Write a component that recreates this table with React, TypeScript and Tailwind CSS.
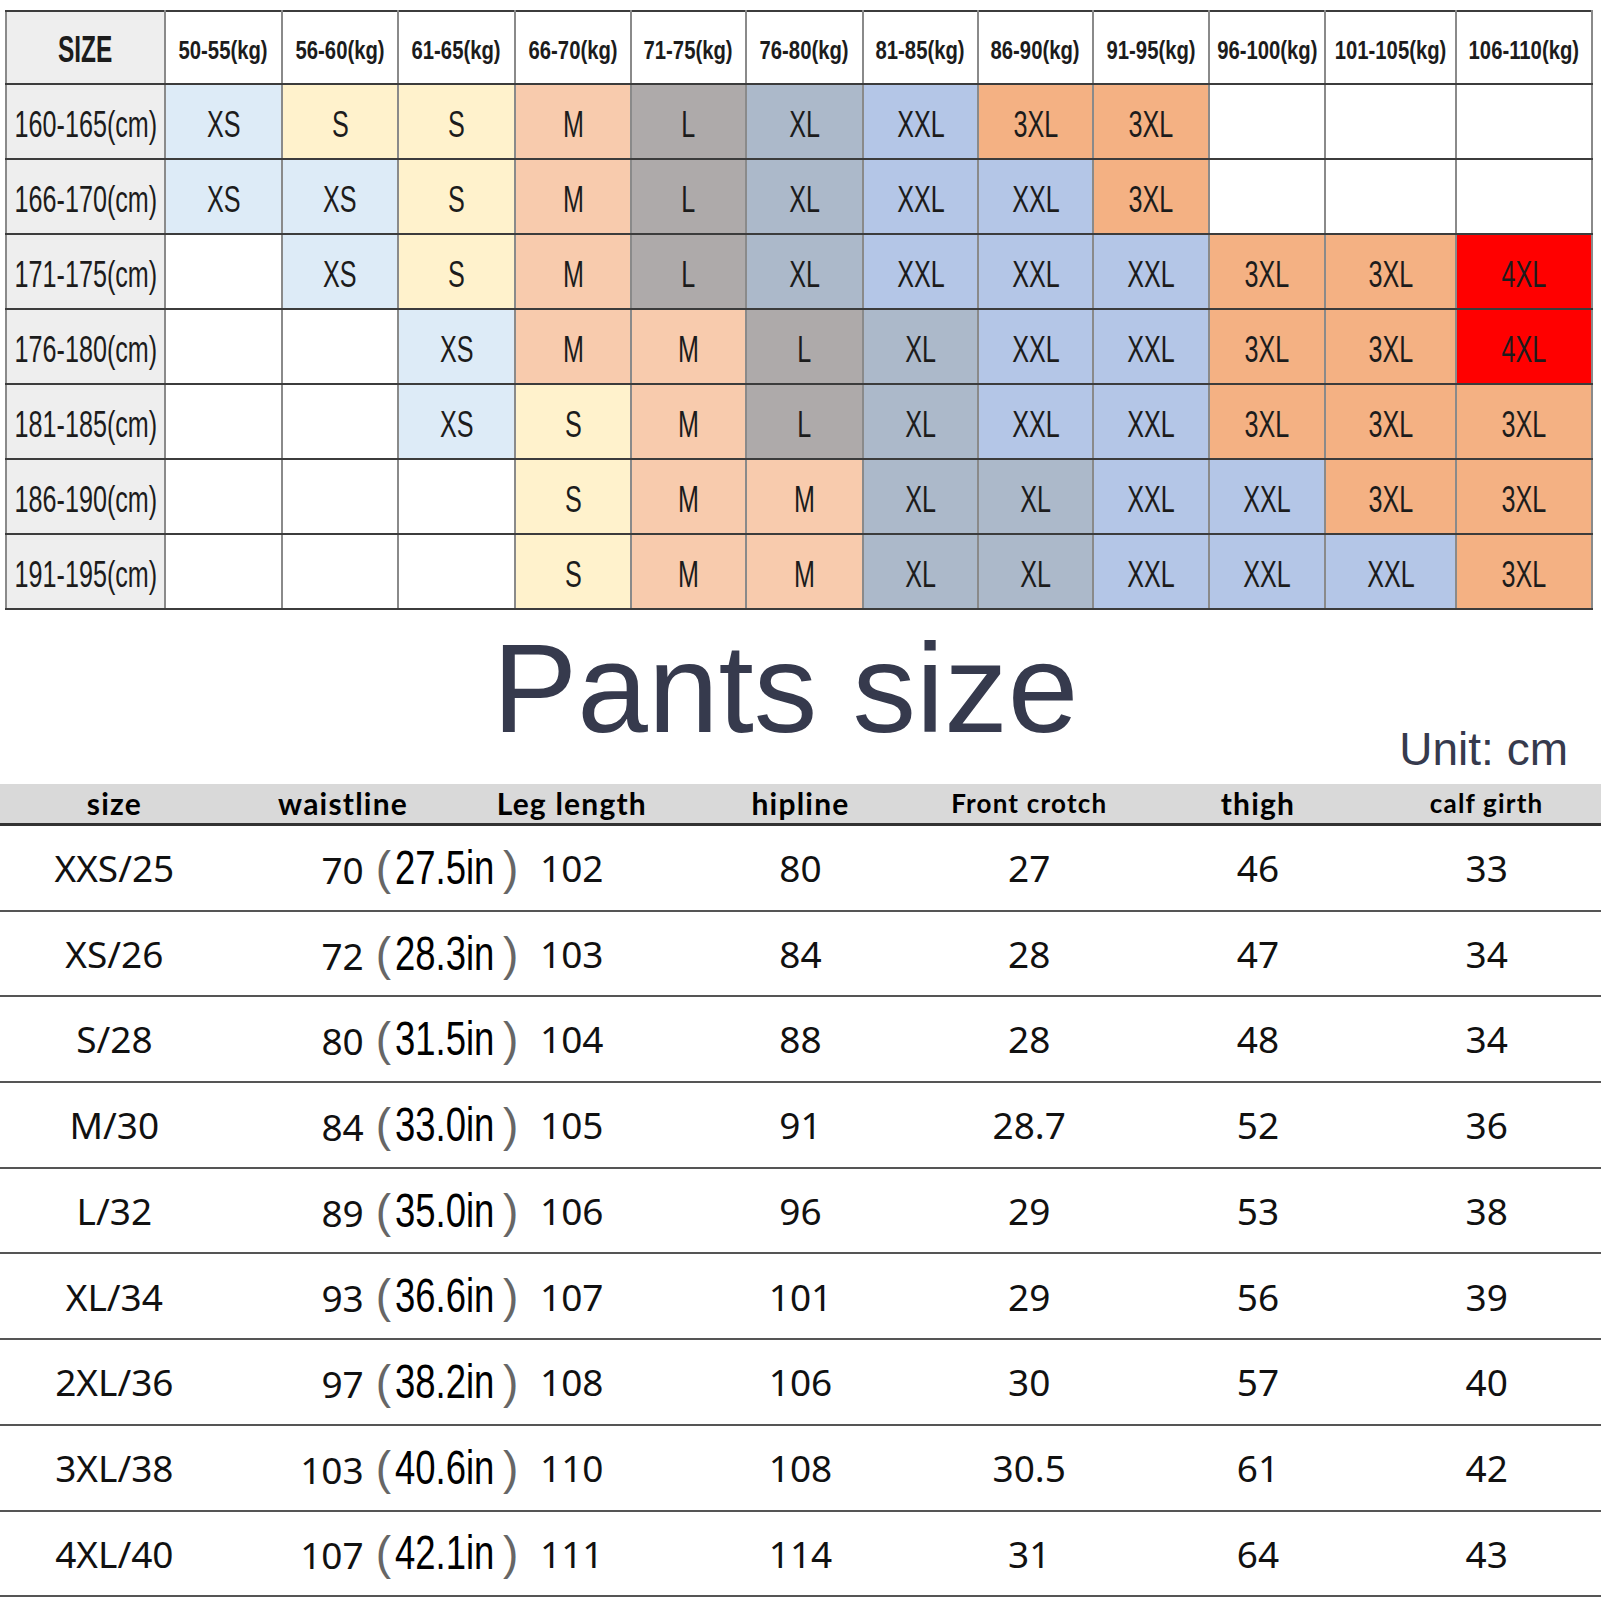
import React from 'react';

const weights = [
    '50-55(kg)', '56-60(kg)', '61-65(kg)', '66-70(kg)', '71-75(kg)', '76-80(kg)',
    '81-85(kg)', '86-90(kg)', '91-95(kg)', '96-100(kg)', '101-105(kg)', '106-110(kg)',
];
const colWidths = ['w-[159px]', 'w-[117px]', 'w-[116px]', 'w-[117px]', 'w-[116px]', 'w-[115px]', 'w-[117px]', 'w-[115px]', 'w-[115px]', 'w-[116px]', 'w-[116px]', 'w-[131px]', 'w-[136px]'];

const chart: [string, string[]][] = [
    ['160-165(cm)', ['XS', 'S', 'S', 'M', 'L', 'XL', 'XXL', '3XL', '3XL', '', '', '']],
    ['166-170(cm)', ['XS', 'XS', 'S', 'M', 'L', 'XL', 'XXL', 'XXL', '3XL', '', '', '']],
    ['171-175(cm)', ['', 'XS', 'S', 'M', 'L', 'XL', 'XXL', 'XXL', 'XXL', '3XL', '3XL', '4XL']],
    ['176-180(cm)', ['', '', 'XS', 'M', 'M', 'L', 'XL', 'XXL', 'XXL', '3XL', '3XL', '4XL']],
    ['181-185(cm)', ['', '', 'XS', 'S', 'M', 'L', 'XL', 'XXL', 'XXL', '3XL', '3XL', '3XL']],
    ['186-190(cm)', ['', '', '', 'S', 'M', 'M', 'XL', 'XL', 'XXL', 'XXL', '3XL', '3XL']],
    ['191-195(cm)', ['', '', '', 'S', 'M', 'M', 'XL', 'XL', 'XXL', 'XXL', 'XXL', '3XL']],
];

const sizeColor: Record<string, string> = {
    XS: 'bg-[#ddebf7]',
    S: 'bg-[#fff2cc]',
    M: 'bg-[#f8cbad]',
    L: 'bg-[#aeaaaa]',
    XL: 'bg-[#acb9ca]',
    XXL: 'bg-[#b4c6e7]',
    '3XL': 'bg-[#f4b183]',
    '4XL': 'bg-[#ff0000]',
};

const pants = [
    ['XXS/25', '70', '27.5in', '102', '80', '27', '46', '33'],
    ['XS/26', '72', '28.3in', '103', '84', '28', '47', '34'],
    ['S/28', '80', '31.5in', '104', '88', '28', '48', '34'],
    ['M/30', '84', '33.0in', '105', '91', '28.7', '52', '36'],
    ['L/32', '89', '35.0in', '106', '96', '29', '53', '38'],
    ['XL/34', '93', '36.6in', '107', '101', '29', '56', '39'],
    ['2XL/36', '97', '38.2in', '108', '106', '30', '57', '40'],
    ['3XL/38', '103', '40.6in', '110', '108', '30.5', '61', '42'],
    ['4XL/40', '107', '42.1in', '111', '114', '31', '64', '43'],
];

const pantsHead = ['size', 'waistline', 'Leg length', 'hipline', 'Front crotch', 'thigh', 'calf girth'];

const cellBorder = "border-2 border-x-[#8a8a8a] border-y-[#3c3c3c]";

// condensed text: the box keeps its width, so centre it with flex so overflow is even on both sides
const Narrow = ({ children, scale }: { children: React.ReactNode, scale: string }) => (
    <div className="flex justify-center">
        <span className={"inline-block shrink-0 whitespace-nowrap " + scale}>{children}</span>
    </div>
);

const App = () => {
    return (
        <div className="w-[1601px] h-[1601px] bg-white overflow-hidden text-[#1c1c1c] font-['Liberation_Sans',sans-serif]">
            {/* weight / height chart */}
            <div className="pt-[10px] pl-[5px]">
                <table className="table-fixed border-collapse w-[1586px] border-2 border-[#3c3c3c]">
                    <colgroup>
                        {colWidths.map((w, i) => <col key={i} className={w} />)}
                    </colgroup>
                    <thead>
                    <tr className="h-[73px]">
                        <th className={cellBorder + " bg-[#eeeeee] pt-[4px] text-[37px] font-bold"}>
                            <Narrow scale="scale-x-[0.66]">SIZE</Narrow>
                        </th>
                        {weights.map((w) => (
                            <th key={w} className={cellBorder + " bg-white pt-[6px] text-[26px] font-bold"}>
                                <Narrow scale="scale-x-[0.78]">{w}</Narrow>
                            </th>
                        ))}
                    </tr>
                    </thead>
                    <tbody>
                    {chart.map(([height, sizes]) => (
                        <tr key={height} className="h-[75px]">
                            <td className={cellBorder + " bg-[#eeeeee] pt-[6px] text-[37px]"}>
                                <Narrow scale="scale-x-[0.68]">{height}</Narrow>
                            </td>
                            {sizes.map((s, idx) => (
                                <td key={idx} className={cellBorder + " pt-[6px] text-[37px] " + (s ? sizeColor[s] : 'bg-white')}>
                                    <Narrow scale="scale-x-[0.68]">{s}</Narrow>
                                </td>
                            ))}
                        </tr>
                    ))}
                    </tbody>
                </table>
            </div>

            {/* title */}
            <div className="h-[174px] flex flex-col text-[#363a4d]">
                <div className="mt-[15px] pr-[30px] text-center text-[127px] leading-[127px]">Pants size</div>
                <div className="-mt-[26px] pr-[33px] text-right text-[46px] leading-[46px]">Unit: cm</div>
            </div>

            {/* pants table */}
            <div className="grid grid-cols-7 h-[42px] bg-[#d9d9d9] border-b-[3px] border-[#333333] font-['Lato',sans-serif] font-bold text-[30px] leading-[39px] tracking-[0.04em] text-black">
                {pantsHead.map((h) => (
                    <div key={h} className={"text-center whitespace-nowrap " + (h === 'Front crotch' || h === 'calf girth' ? 'text-[26px]' : '')}>{h}</div>
                ))}
            </div>
            {pants.map((row) => (
                <div key={row[0]} className="grid grid-cols-7 h-[85.7px] border-b-2 border-[#555555] items-center font-['Noto_Sans',sans-serif] text-[37px] text-[#111111]">
                    <div className="text-center">{row[0]}</div>
                    <div className="flex items-baseline">
                        <div className="w-[135px] shrink-0 text-right">{row[1]}</div>
                        <span className="ml-[12px] shrink-0 text-[46px] font-['Liberation_Sans',sans-serif] text-[#666666]">(</span>
                        <span className="ml-[4px] w-[100px] shrink-0 inline-block text-[48px] font-['Liberation_Sans',sans-serif] text-black">
                            <span className="inline-block whitespace-nowrap origin-left scale-x-[0.76]">{row[2]}</span>
                        </span>
                        <span className="ml-[8px] shrink-0 text-[46px] font-['Liberation_Sans',sans-serif] text-[#666666]">)</span>
                    </div>
                    {row.slice(3).map((v, i) => (
                        <div key={i} className="text-center">{v}</div>
                    ))}
                </div>
            ))}
        </div>
    );
};

export default App;
